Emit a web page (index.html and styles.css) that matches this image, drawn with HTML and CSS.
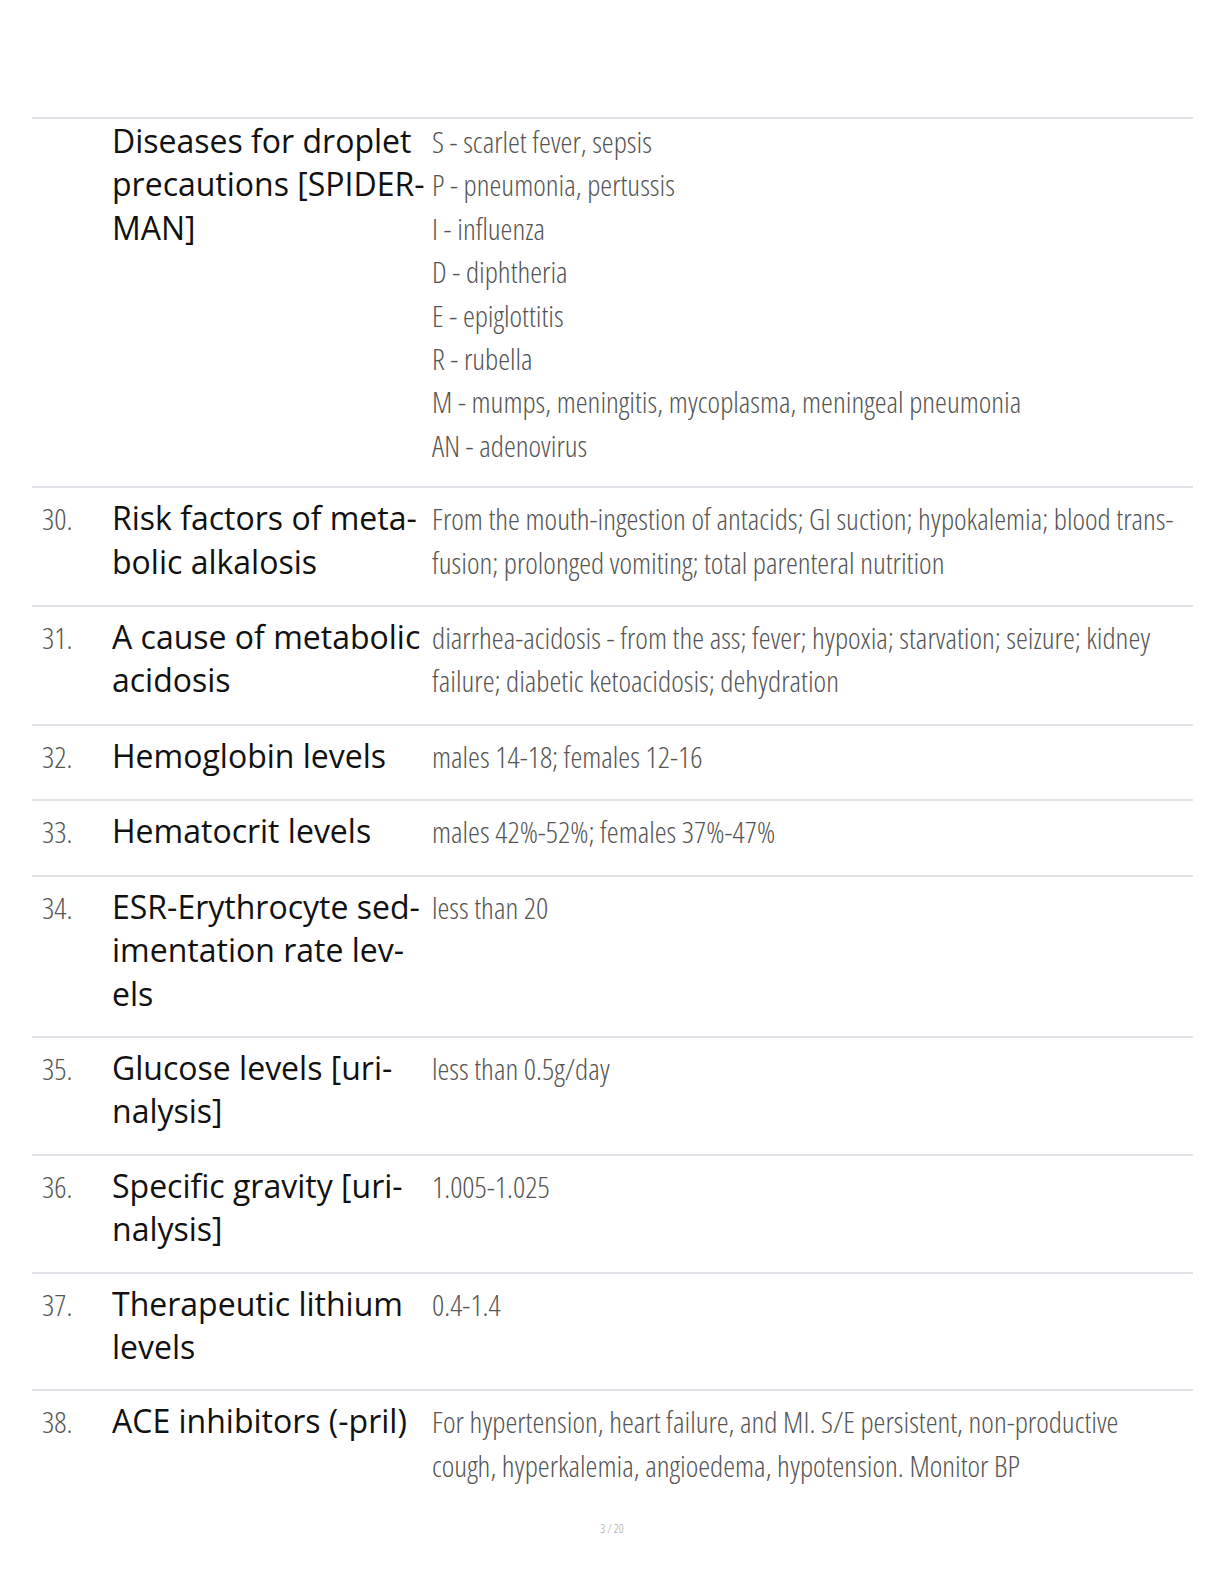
FILE: index.html
```html
<!DOCTYPE html>
<html lang="en">
<head>
<meta charset="utf-8">
<title>Study notes 3 / 20</title>
<link rel="stylesheet" href="styles.css">
</head>
<body>
<main class="page">
  <div class="table">
    <div class="row row-first">
      <div class="num"></div>
      <div class="term">Diseases for droplet precautions [SPIDER-MAN]</div>
      <div class="def">
        <div>S - scarlet fever, sepsis</div>
        <div>P - pneumonia, pertussis</div>
        <div>I - influenza</div>
        <div>D - diphtheria</div>
        <div>E - epiglottitis</div>
        <div>R - rubella</div>
        <div>M - mumps, meningitis, mycoplasma, meningeal pneumonia</div>
        <div>AN - adenovirus</div>
      </div>
    </div>
    <div class="row">
      <div class="num">30.</div>
      <div class="term">Risk factors of meta&shy;bolic alkalosis</div>
      <div class="def">From the mouth-ingestion of antacids; GI suction; hypokalemia; blood trans&shy;fusion; prolonged vomiting; total parenteral nutrition</div>
    </div>
    <div class="row">
      <div class="num">31.</div>
      <div class="term">A cause of metabolic acidosis</div>
      <div class="def">diarrhea-acidosis - from the ass; fever; hypoxia; starvation; seizure; kidney failure; diabetic ketoacidosis; dehydration</div>
    </div>
    <div class="row">
      <div class="num">32.</div>
      <div class="term">Hemoglobin levels</div>
      <div class="def">males 14-18; females 12-16</div>
    </div>
    <div class="row">
      <div class="num">33.</div>
      <div class="term">Hematocrit levels</div>
      <div class="def">males 42%-52%; females 37%-47%</div>
    </div>
    <div class="row">
      <div class="num">34.</div>
      <div class="term">ESR-Erythrocyte sed&shy;imentation rate lev&shy;els</div>
      <div class="def">less than 20</div>
    </div>
    <div class="row">
      <div class="num">35.</div>
      <div class="term">Glucose levels [uri&shy;nalysis]</div>
      <div class="def">less than 0.5g/day</div>
    </div>
    <div class="row">
      <div class="num">36.</div>
      <div class="term">Specific gravity [uri&shy;nalysis]</div>
      <div class="def">1.005-1.025</div>
    </div>
    <div class="row">
      <div class="num">37.</div>
      <div class="term">Therapeutic lithium levels</div>
      <div class="def">0.4-1.4</div>
    </div>
    <div class="row">
      <div class="num">38.</div>
      <div class="term">ACE inhibitors (-pril)</div>
      <div class="def">For hypertension, heart failure, and MI. S/E persistent, non-productive cough, hyperkalemia, angioedema, hypotension. Monitor BP</div>
    </div>
  </div>
  <footer class="pager">3 / 20</footer>
</main>
</body>
</html>
```

FILE: styles.css
```css
html, body {
  margin: 0;
  padding: 0;
  background: #ffffff;
}

body {
  font-family: "Open Sans", "Noto Sans", "DejaVu Sans", sans-serif;
  color: #111111;
}

.page {
  width: 1224px;
  padding-top: 117px;
}

.table {
  margin-left: 32px;
  width: 1161px;
}

.row {
  display: grid;
  grid-template-columns: 80px 320px 1fr;
  align-items: baseline;
  border-top: 2px solid #e2e2e9;
  padding: 8px 0 21px;
}

.row-first {
  padding-top: 0;
  padding-bottom: 19px;
}

.num {
  padding-left: 10px;
  font-size: 30px;
  font-weight: 300;
  font-stretch: 75%;
  line-height: 43.4px;
  color: #555555;
}

.term {
  font-size: 32px;
  font-weight: 400;
  line-height: 43.4px;
  color: #111111;
  padding-right: 6px;
}

.def {
  font-size: 30px;
  font-weight: 300;
  font-stretch: 75%;
  line-height: 43.4px;
  color: #555555;
  padding-right: 12px;
}

.pager {
  margin-top: 12px;
  text-align: center;
  font-size: 12px;
  font-weight: 300;
  font-stretch: 75%;
  color: #a0a0a0;
}
```
